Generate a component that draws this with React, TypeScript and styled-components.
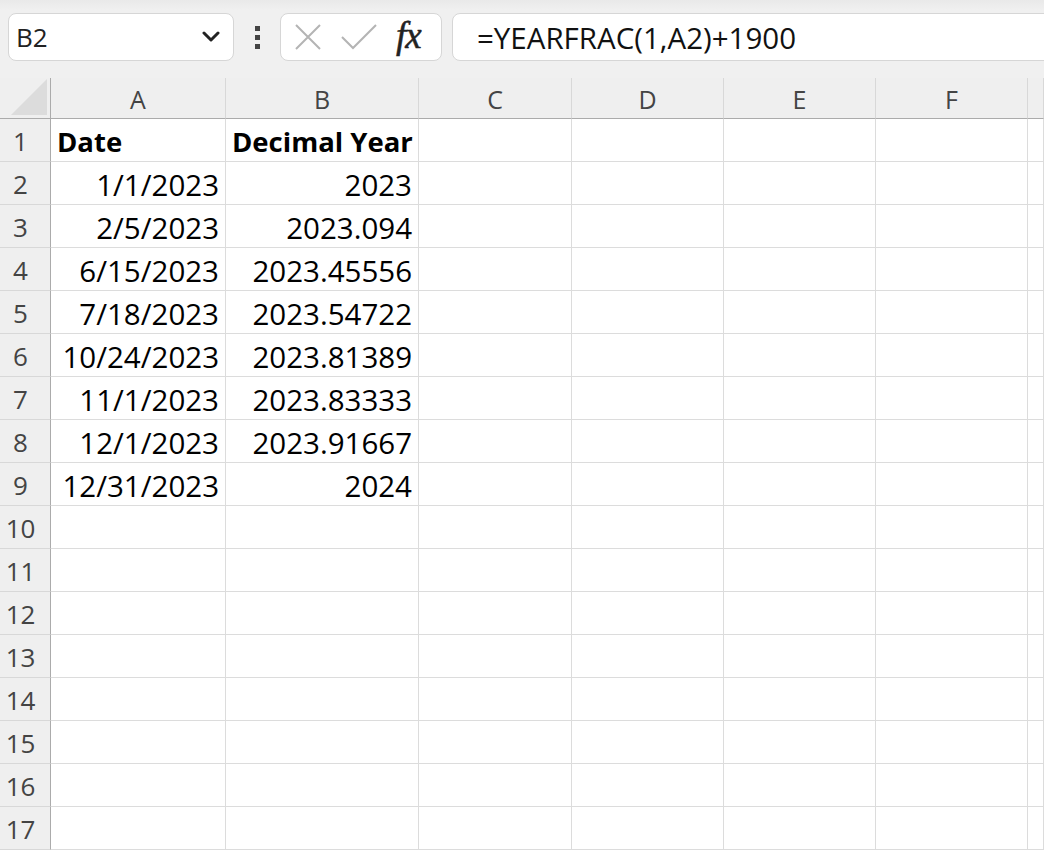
import React, { FC } from 'react';
import styled, { createGlobalStyle } from 'styled-components';

const GlobalStyle = createGlobalStyle`
  html, body {
    margin: 0;
    padding: 0;
    background: #ffffff;
    overflow: hidden;
  }
  body {
    font-family: "Open Sans", "Noto Sans", sans-serif;
  }
`;

const COLUMNS = ['A', 'B', 'C', 'D', 'E', 'F', ''];
const COL_WIDTHS = '175px 193px 153px 152px 152px 152px 1fr';

interface RowData {
  a: string;
  b: string;
  bold?: boolean;
}

const ROWS: RowData[] = [
  { a: 'Date', b: 'Decimal Year', bold: true },
  { a: '1/1/2023', b: '2023' },
  { a: '2/5/2023', b: '2023.094' },
  { a: '6/15/2023', b: '2023.45556' },
  { a: '7/18/2023', b: '2023.54722' },
  { a: '10/24/2023', b: '2023.81389' },
  { a: '11/1/2023', b: '2023.83333' },
  { a: '12/1/2023', b: '2023.91667' },
  { a: '12/31/2023', b: '2024' },
];

const TOTAL_ROWS = 17;

const CrossIcon = () => (
  <svg width="28" height="28" viewBox="0 0 28 28">
    <path d="M2 2 L26 26 M26 2 L2 26" stroke="#b4b4b4" strokeWidth="2" fill="none" />
  </svg>
);

const CheckIcon = () => (
  <svg width="38" height="28" viewBox="0 0 38 28">
    <path d="M2 14 L13 25 L36 2" stroke="#b4b4b4" strokeWidth="2" fill="none" />
  </svg>
);

const Chevron = () => (
  <svg width="18" height="12" viewBox="0 0 18 12">
    <path d="M2 2 L9 9 L16 2" stroke="#222" strokeWidth="3" fill="none" strokeLinecap="round" strokeLinejoin="round" />
  </svg>
);

const Corner = () => (
  <svg width="36" height="36" viewBox="0 0 36 36">
    <polygon points="0,36 36,0 36,36" fill="#dcdcdc" />
  </svg>
);

const App: FC = () => {
  return (
    <>
      <GlobalStyle />
      <Page>
        <Toolbar>
          <NameBox>
            <NameText>B2</NameText>
            <Chevron />
          </NameBox>
          <Dots>
            <Dot />
            <Dot />
            <Dot />
          </Dots>
          <ActionBox>
            <CrossIcon />
            <CheckIcon />
            <Fx>fx</Fx>
          </ActionBox>
          <FormulaBox>=YEARFRAC(1,A2)+1900</FormulaBox>
        </Toolbar>

        <Sheet>
          <CornerCell>
            <Corner />
          </CornerCell>
          {COLUMNS.map((c, i) => (
            <ColHeader key={'h' + i}>{c}</ColHeader>
          ))}

          {Array.from({ length: TOTAL_ROWS }).map((_, r) => {
            const data = ROWS[r];
            return (
              <React.Fragment key={r}>
                <RowHeader>{r + 1}</RowHeader>
                {COLUMNS.map((_, ci) => {
                  let text = '';
                  if (data && ci === 0) text = data.a;
                  if (data && ci === 1) text = data.b;
                  return (
                    <Cell key={ci} $bold={!!data?.bold}>
                      {text}
                    </Cell>
                  );
                })}
              </React.Fragment>
            );
          })}
        </Sheet>
      </Page>
    </>
  );
};

export default App;

const Page = styled.div`
  width: 1044px;
  height: 850px;
  background: #f0f0f0;
  display: flex;
  flex-direction: column;
`;

const Toolbar = styled.div`
  height: 78px;
  box-sizing: border-box;
  padding: 13px 0 17px 8px;
  display: flex;
  align-items: stretch;
  background: linear-gradient(#e9e9e9 0px, #f0f0f0 10px);
`;

const NameBox = styled.div`
  width: 226px;
  box-sizing: border-box;
  background: #fff;
  border: 1px solid #d6d6d6;
  border-radius: 8px;
  display: flex;
  align-items: center;
  justify-content: space-between;
  padding: 0 13px 0 7px;
`;

const NameText = styled.span`
  font-size: 26px;
  color: #222;
`;

const Dots = styled.div`
  width: 46px;
  display: flex;
  flex-direction: column;
  align-items: center;
  justify-content: center;
  gap: 4px;
`;

const Dot = styled.div`
  width: 5px;
  height: 5px;
  background: #444;
`;

const ActionBox = styled.div`
  width: 162px;
  box-sizing: border-box;
  background: #fff;
  border: 1px solid #d6d6d6;
  border-radius: 8px;
  display: flex;
  align-items: center;
  padding: 0 8px 0 13px;
  gap: 18px;
`;

const Fx = styled.span`
  font-family: "Liberation Serif", "DejaVu Serif", serif;
  font-style: italic;
  font-size: 37px;
  line-height: 1;
  color: #222;
  letter-spacing: -1px;
  margin-top: -4px;
  -webkit-text-stroke: 0.5px #222;
`;

const FormulaBox = styled.div`
  flex: 1;
  margin-left: 10px;
  margin-right: -20px;
  background: #fff;
  border: 1px solid #d6d6d6;
  border-radius: 8px;
  display: flex;
  align-items: center;
  padding-left: 24px;
  font-size: 29.5px;
  color: #111;
`;

const Sheet = styled.div`
  flex: 1;
  display: grid;
  grid-template-columns: 51px ${COL_WIDTHS};
  grid-template-rows: 41px repeat(${TOTAL_ROWS}, 43px);
  background: #fff;
  overflow: hidden;
`;

const CornerCell = styled.div`
  background: #efefef;
  border-right: 1px solid #ababab;
  border-bottom: 1px solid #ababab;
  display: flex;
  align-items: flex-end;
  justify-content: flex-end;
  padding: 0 3px 3px 0;
`;

const ColHeader = styled.div`
  background: #efefef;
  border-bottom: 1px solid #ababab;
  border-right: 1px solid #d8d8d8;
  display: flex;
  align-items: center;
  justify-content: center;
  font-size: 25px;
  color: #444;
  padding-top: 2px;
`;

const RowHeader = styled.div`
  background: #efefef;
  border-right: 1px solid #ababab;
  border-bottom: 1px solid #d8d8d8;
  display: flex;
  align-items: center;
  justify-content: center;
  padding-right: 9px;
  padding-top: 2px;
  font-size: 26px;
  color: #444;
`;

const Cell = styled.div<{ $bold: boolean }>`
  border-right: 1px solid #dcdcdc;
  border-bottom: 1px solid #dcdcdc;
  display: flex;
  align-items: center;
  justify-content: ${(p) => (p.$bold ? 'flex-start' : 'flex-end')};
  padding: 3px 6px 0 6px;
  font-size: ${(p) => (p.$bold ? '27.5px' : '29.5px')};
  font-weight: ${(p) => (p.$bold ? 700 : 400)};
  color: #000;
  white-space: nowrap;
  overflow: hidden;
`;
